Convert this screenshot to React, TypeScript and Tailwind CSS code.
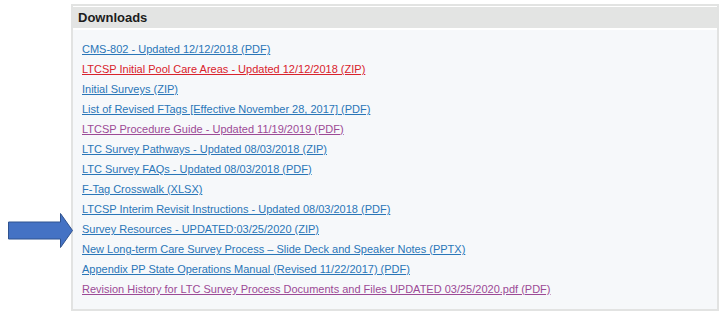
const links: { label: string; color: "blue" | "red" | "purple" }[] = [
  { label: "CMS-802 - Updated 12/12/2018 (PDF)", color: "blue" },
  { label: "LTCSP Initial Pool Care Areas - Updated 12/12/2018 (ZIP)", color: "red" },
  { label: "Initial Surveys (ZIP)", color: "blue" },
  { label: "List of Revised FTags [Effective November 28, 2017] (PDF)", color: "blue" },
  { label: "LTCSP Procedure Guide - Updated 11/19/2019 (PDF)", color: "purple" },
  { label: "LTC Survey Pathways - Updated 08/03/2018 (ZIP)", color: "blue" },
  { label: "LTC Survey FAQs - Updated 08/03/2018 (PDF)", color: "blue" },
  { label: "F-Tag Crosswalk (XLSX)", color: "blue" },
  { label: "LTCSP Interim Revisit Instructions - Updated 08/03/2018 (PDF)", color: "blue" },
  { label: "Survey Resources - UPDATED:03/25/2020 (ZIP)", color: "blue" },
  { label: "New Long-term Care Survey Process – Slide Deck and Speaker Notes (PPTX)", color: "blue" },
  { label: "Appendix PP State Operations Manual (Revised 11/22/2017) (PDF)", color: "blue" },
  {
    label: "Revision History for LTC Survey Process Documents and Files UPDATED 03/25/2020.pdf (PDF)",
    color: "purple",
  },
];

const colorClass = {
  blue: "text-[#2a76b8]",
  red: "text-[#d9222c]",
  purple: "text-[#9c4a96]",
};

function Arrow() {
  return (
    <svg
      className="absolute left-[7px] top-[212px]"
      width="67"
      height="37"
      viewBox="0 0 67 37"
    >
      <path
        d="M1.5 10 H53.5 V1.5 L65.5 18.5 L53.5 35.5 V27 H1.5 Z"
        fill="#4472c4"
        stroke="#2f528f"
        strokeWidth="1"
      />
    </svg>
  );
}

export default function App() {
  return (
    <div className="relative h-[319px] w-[728px] bg-white pt-[4px] font-['Liberation_Sans',Arial,sans-serif]">
      <Arrow />
      <div className="ml-[71px] w-[648px] border-2 border-[#e2e3e2] bg-[#f6f8fa]">
        <div className="h-[24px] border-t border-b-2 border-white bg-[#e3e4e3] pl-[5px] text-[13px] font-bold leading-[21px] text-[#1c1c1c]">
          Downloads
        </div>
        <ul className="pb-[10px] pl-[9px] pt-[9px]">
          {links.map((l) => (
            <li key={l.label} className="text-[11px] leading-[20px]">
              <a href="#" className={`underline ${colorClass[l.color]}`}>
                {l.label}
              </a>
            </li>
          ))}
        </ul>
      </div>
    </div>
  );
}
